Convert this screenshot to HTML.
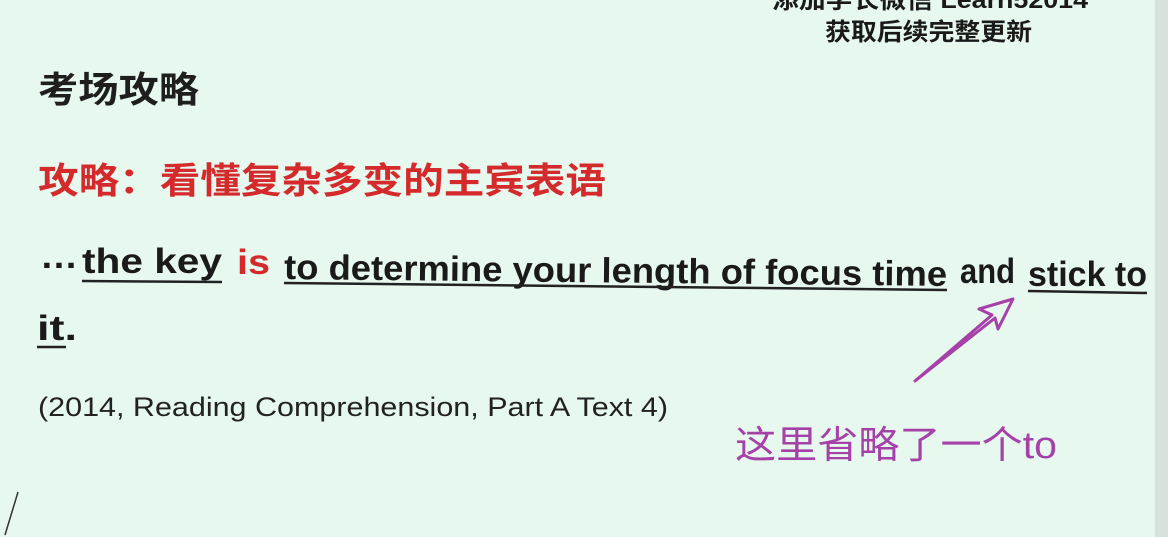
<!DOCTYPE html>
<html><head><meta charset="utf-8"><style>
html,body{margin:0;padding:0;width:1168px;height:537px;overflow:hidden;background:#e8f8ef}
svg{position:absolute;left:0;top:0}
</style></head><body>
<svg width="1168" height="537" viewBox="0 0 1168 537" xmlns="http://www.w3.org/2000/svg">
<rect x="0" y="0" width="1168" height="537" fill="#e7f8ee"/>
<rect x="1155" y="0" width="13" height="537" fill="#d6e3da"/>
<g font-family="'Liberation Sans','Noto Sans CJK SC',sans-serif" font-weight="bold">
<text x="772" y="8" font-size="24" fill="#1a1a1a" textLength="316" lengthAdjust="spacingAndGlyphs">添加学长微信 Learn52014</text>
<text x="825" y="40" font-size="24" fill="#1a1a1a" textLength="207" lengthAdjust="spacingAndGlyphs">获取后续完整更新</text>
<text x="38" y="102" font-size="36" fill="#1e1e1e" textLength="161" lengthAdjust="spacingAndGlyphs">考场攻略</text>
<text x="38" y="193" font-size="36" fill="#d42a2c" textLength="568" lengthAdjust="spacingAndGlyphs">攻略：看懂复杂多变的主宾表语</text>
<g font-size="35" fill="#1a1a1a">
<text x="40" y="268" textLength="38" lengthAdjust="spacingAndGlyphs">…</text>
<text x="82" y="273" textLength="140" lengthAdjust="spacingAndGlyphs">the key</text>
<text x="237" y="274" fill="#d42a2c" textLength="33" lengthAdjust="spacingAndGlyphs">is</text>
<text x="284" y="279" textLength="663" lengthAdjust="spacingAndGlyphs" transform="rotate(0.6 284 279)">to determine your length of focus time</text>
<text x="960" y="283" textLength="55" lengthAdjust="spacingAndGlyphs">and</text>
<text x="1028" y="286" textLength="119" lengthAdjust="spacingAndGlyphs">stick to</text>
<text x="37" y="340" textLength="40" lengthAdjust="spacingAndGlyphs">it.</text>
</g>
<text x="38" y="416" font-size="27" font-weight="normal" fill="#222" textLength="630" lengthAdjust="spacingAndGlyphs">(2014, Reading Comprehension, Part A Text 4)</text>
</g>
<g stroke="#222" stroke-width="2.5" fill="none">
<line x1="82" y1="281" x2="222" y2="282"/>
<line x1="284" y1="283" x2="947" y2="290"/>
<line x1="1028" y1="291" x2="1147" y2="293"/>
<line x1="37" y1="347" x2="66" y2="347"/>
</g>
<text x="735" y="458" font-family="'Liberation Sans','Noto Sans CJK SC',sans-serif" font-size="38" fill="#a541a8" textLength="322" lengthAdjust="spacingAndGlyphs">这里省略了一个to</text>
<g stroke="#a541a8" stroke-width="3" fill="none" stroke-linejoin="round" stroke-linecap="round">
<path d="M915 381 L992 315 L979 309 L1013 299 L998 329 L995 318 Z"/>
</g>
<line x1="5" y1="535" x2="18" y2="492" stroke="#333" stroke-width="1.5"/>
</svg>
</body></html>
